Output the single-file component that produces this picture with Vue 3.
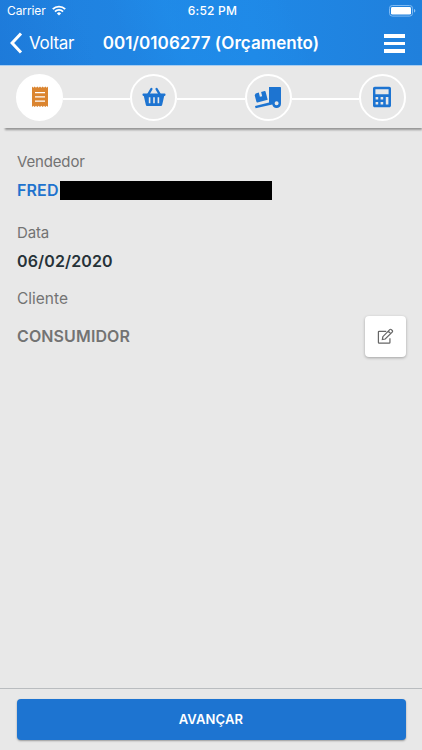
<template>
  <div class="screen">
    <header class="app-header">
      <div class="status-bar">
        <div class="carrier">
          <span>Carrier</span>
          <svg class="wifi" viewBox="0 0 14 11">
            <path d="M.8 4.200a8.700 8.700 0 0 1 12.400 0M3 6.600a5.600 5.600 0 0 1 8 0" fill="none" stroke="#fff" stroke-width="1.900" />
            <path d="M4.900 8.400a3 3 0 0 1 4.200 0L7 10.600z" fill="#fff" />
          </svg>
        </div>
        <span class="clock">6:52 PM</span>
        <svg class="battery" viewBox="0 0 27 12">
          <rect x="0.5" y="0.5" width="23" height="10.600" rx="2.800" fill="none" stroke="#7fbaf3" />
          <rect x="2" y="2" width="20" height="7.600" rx="1.400" fill="#fff" />
          <path d="M25 4v3.600c.9-.3 1.300-1 1.300-1.800S25.900 4.300 25 4z" fill="#8fc3f5" />
        </svg>
      </div>
      <div class="toolbar">
        <button class="back">
          <svg viewBox="0 0 13 22">
            <path d="M11.500 1.500 2.600 11l8.900 9.500" fill="none" stroke="#fff" stroke-width="3" />
          </svg>
          <span>Voltar</span>
        </button>
        <h1 class="title">{{ titulo }}</h1>
        <button class="menu">
          <i></i>
          <i></i>
          <i></i>
        </button>
      </div>
    </header>

    <!-- Etapas do pedido -->
    <nav class="steps">
      <template v-for="(etapa, i) in etapas" :key="etapa">
        <div v-if="i > 0" class="line"></div>
        <div class="step" :class="{ active: etapa === etapaAtual }">
          <svg v-if="etapa === 'dados'" viewBox="0 0 24 24">
            <path fill="currentColor" fill-rule="evenodd" d="M4 1.500l1.300 1.300 1.400-1.300L8 2.800l1.300-1.300 1.400 1.300L12 1.500l1.300 1.300 1.400-1.300L16 2.800l1.300-1.300 1.400 1.300L20 1.500v20.500l-1.300-1.300-1.400 1.300-1.300-1.300-1.300 1.300-1.400-1.300L12 22l-1.300-1.300L9.300 22 8 20.700 6.700 22l-1.400-1.300L4 22zM7 7v1.300h10V7zM7 11.200v1.300h10v-1.300zM7 15.400v1.300h10v-1.300z" />
          </svg>
          <svg v-else-if="etapa === 'itens'" viewBox="0 0 24 24">
            <path d="M6.200 9.500 9.400 4M17.800 9.500 14.600 4" fill="none" stroke="currentColor" stroke-width="2.400" stroke-linecap="round" />
            <path fill="currentColor" fill-rule="evenodd" d="M1.300 8.500h21.400c.5 0 .8.300.8.800v.8c0 .5-.3.800-.8.800h-.5l-2 8.800c-.2.800-.7 1.300-1.500 1.300H5.300c-.8 0-1.300-.5-1.500-1.300l-2-8.800h-.5c-.5 0-.8-.3-.8-.8v-.8c0-.5.3-.8.800-.8zM6.800 12.200v6h1.600v-6zM11.200 12.200v6h1.600v-6zM15.600 12.200v6h1.600v-6z" />
          </svg>
          <svg v-else-if="etapa === 'entrega'" class="truck" viewBox="0 0 28 24">
            <path fill="currentColor" fill-rule="evenodd" d="M15 2h11c.6 0 1 .4 1 1v15.500a4.400 4.400 0 0 1-8.700 1L1.600 23.200 1 21l14-3.600zM22.600 16.300a2 2 0 1 0 0 4 2 2 0 0 0 0-4z" />
            <path fill="currentColor" d="M1.700 8.400 4.800 7.600l1.100 4.200 2.300-.6-1.100-4.200L10.600 6.100c.5-.1.900.1 1 .6l2.100 8-10.300 2.700c-.5.100-.9-.1-1-.6L.7 10.200 1.100 9.400z" />
          </svg>
          <svg v-else viewBox="0 0 24 24">
            <path fill="currentColor" fill-rule="evenodd" d="M4.800 1.800h14.400c1 0 1.800.8 1.800 1.800v16.800c0 1-.8 1.800-1.800 1.800H4.800c-1 0-1.800-.8-1.800-1.800V3.600c0-1 .8-1.800 1.800-1.800zM5.400 4.300v5h13.200v-5zM5.600 12v2.500h2.600V12zM10.600 12v2.500h2.600V12zM15.800 12v7.500h2.600V12zM5.600 17v2.500h2.600V17zM10.600 17v2.500h2.600V17z" />
          </svg>
        </div>
      </template>
    </nav>

    <main class="content">
      <section class="field vendedor">
        <label>Vendedor</label>
        <div class="vendedor-row">
          <strong>{{ vendedor }}</strong>
          <span class="mask"></span>
        </div>
      </section>
      <section class="field data">
        <label>Data</label>
        <strong>{{ data }}</strong>
      </section>
      <section class="field cliente">
        <label>Cliente</label>
        <div class="cliente-row">
          <strong>{{ cliente }}</strong>
          <button class="edit">
            <svg viewBox="0 0 18 18">
              <path d="M9.800 3.500H2.300c-.5 0-.8.300-.8.800v11c0 .5.300.800.800.800h10.600c.5 0 .8-.3.800-.8v-4.500" />
              <path d="m6.200 9.200-.5 3 3-.5 7.400-7.400c.5-.5.5-1.200 0-1.700l-.9-.9c-.5-.5-1.200-.5-1.700 0zM12 3.400 14.500 6" />
            </svg>
          </button>
        </div>
      </section>
    </main>

    <footer class="footer">
      <button class="next">AVANÇAR</button>
    </footer>
  </div>
</template>

<script setup>
import { ref } from 'vue'

const titulo = ref('001/0106277 (Orçamento)')
const vendedor = ref('FRED')
const data = ref('06/02/2020')
const cliente = ref('CONSUMIDOR')

// Etapas
const etapas = ['dados', 'itens', 'entrega', 'total']
const etapaAtual = ref('dados')
</script>

<style>
body {
  margin: 0;
  background: #e8e8e8;
}
</style>

<style scoped>
.screen {
  display: flex;
  flex-direction: column;
  height: 100vh;
  overflow: hidden;
  background: #e8e8e8;
  font-family: Inter, "Liberation Sans", sans-serif;
}

button {
  margin: 0;
  padding: 0;
  border: 0;
  background: none;
  color: inherit;
  font-family: inherit;
}

svg {
  display: block;
}

.app-header {
  flex: none;
  box-sizing: border-box;
  height: 66px;
  border-bottom: 1px solid #a9cdf0;
  color: #fff;
  background:
    linear-gradient(70deg, rgba(25, 112, 210, 0.35) 0, transparent 22%),
    linear-gradient(68deg, transparent 30%, rgba(31, 147, 240, 0.35) 42%, rgba(31, 147, 240, 0.1) 66%, transparent 70%),
    linear-gradient(90deg, #2080de, #1f88e6 60%, #2080dc);
}

.status-bar {
  display: grid;
  grid-template-columns: 1fr auto 1fr;
  align-items: center;
  height: 22px;
  padding: 0 6px 0 7px;
  font-size: 12px;
}

.carrier {
  display: flex;
  align-items: center;
  gap: 6px;
  letter-spacing: -0.1px;
}

.carrier span {
  line-height: 14px;
  margin-top: -1px;
}

.wifi {
  width: 14px;
  height: 11px;
  margin-top: -2px;
}

.clock {
  margin: -1px 0 0 2px;
  font-weight: 500;
  letter-spacing: 0.2px;
}

.battery {
  justify-self: end;
  width: 27px;
  height: 12px;
  margin-top: -1px;
}

.toolbar {
  display: grid;
  grid-template-columns: 1fr auto 1fr;
  align-items: center;
  height: 43px;
  padding: 0 17px 0 9px;
}

.back {
  display: flex;
  align-items: center;
  gap: 7px;
  font-size: 17px;
  letter-spacing: -0.3px;
}

.back svg {
  width: 14px;
  height: 22px;
  margin-right: -1px;
  margin-top: -1px;
}

.back span {
  margin-top: -1px;
}

.title {
  margin: -2px 0 0 8px;
  font-size: 17px;
  font-weight: 600;
  letter-spacing: 0.06px;
  white-space: nowrap;
}

.menu {
  display: flex;
  flex-direction: column;
  gap: 4px;
  justify-self: end;
}

.menu i {
  width: 21px;
  height: 3.500px;
  background: #fff;
}

.steps {
  display: flex;
  align-items: center;
  flex: none;
  box-sizing: border-box;
  height: 62px;
  margin-left: 3px;
  padding: 0 16px 0 13px;
  box-shadow: 1px 3px 2px -1px rgba(0, 0, 0, 0.36);
}

.line {
  flex: 1;
  height: 2px;
  margin-top: 3px;
  background: #fff;
}

.step {
  display: flex;
  align-items: center;
  justify-content: center;
  box-sizing: border-box;
  width: 47px;
  height: 47px;
  border: 2px solid #fff;
  border-radius: 50%;
  color: #1d74d1;
}

.step.active {
  background: #fff;
  color: #db8530;
}

.step svg {
  width: 24px;
  height: 24px;
}

.step .truck {
  width: 28px;
}

.content {
  flex: 1;
  padding: 23px 16px 0 17px;
}

.field label {
  display: block;
  height: 20px;
  color: #737373;
  font-size: 15.500px;
  line-height: 22px;
}

.field strong {
  display: block;
  font-size: 16px;
  font-weight: 600;
  line-height: 20px;
  letter-spacing: 0.12px;
}

.vendedor label,
.data label {
  font-size: 15px;
  letter-spacing: -0.15px;
}

.vendedor-row {
  display: flex;
  align-items: center;
  height: 20px;
  margin-top: 9px;
  color: #1f73ce;
}

.vendedor-row strong {
  width: 43px;
}

.mask {
  width: 212px;
  height: 19px;
  background: #000;
}

.data {
  margin-top: 22px;
}

.data strong {
  margin-top: 9px;
  color: #263238;
}

.cliente {
  margin-top: 17px;
}

.cliente-row {
  display: flex;
  align-items: center;
  justify-content: space-between;
  height: 41px;
  margin-top: 8px;
}

.cliente-row strong {
  margin-top: -1px;
  color: #737373;
}

.edit {
  display: flex;
  align-items: center;
  justify-content: center;
  width: 41px;
  height: 41px;
  border-radius: 4px;
  background: #fff;
  box-shadow: 0 1px 3px rgba(0, 0, 0, 0.3);
}

.edit svg {
  width: 17px;
  height: 17px;
  margin-right: 1px;
  fill: none;
  stroke: #666;
  stroke-width: 1.300;
}

.footer {
  flex: none;
  box-sizing: border-box;
  height: 62px;
  padding: 10px 16.500px 0;
  border-top: 1px solid #b9bcbf;
}

.next {
  display: block;
  width: 100%;
  height: 41px;
  padding-bottom: 1px;
  border-radius: 4px;
  background: #1d74d1;
  color: #fff;
  font-size: 13px;
  font-weight: 600;
  letter-spacing: 0.15px;
  box-shadow: 0 1px 2px rgba(0, 0, 0, 0.35);
}
</style>
